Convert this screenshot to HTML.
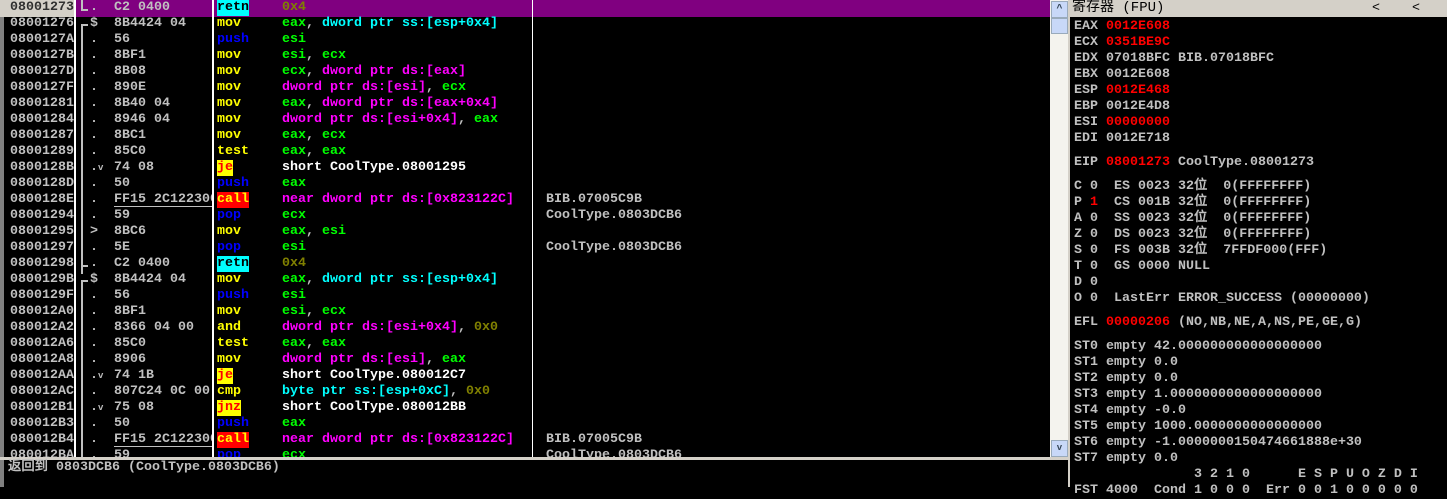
<!DOCTYPE html>
<html><head><meta charset="utf-8"><style>
*{margin:0;padding:0}
body{width:1447px;height:487px;background:#000;position:relative;overflow:hidden;font-family:"Liberation Mono","WenQuanYi Zen Hei",monospace;font-size:13.33px;font-weight:bold;color:#c0c0c0}
.r{position:absolute;left:0;width:1050px;height:16px;line-height:16px;white-space:pre}
.r span{position:absolute}
.a{left:10px}.m{left:90px}.h{left:114px;width:98px;overflow:hidden}.i{left:217px}.o{left:282px}.c{left:546px}
.g{color:#00ff00}.cy{color:#00ffff}.mg{color:#ff00ff}.y{color:#ffff00}.b{color:#0000ff}.ol{color:#808000}.w{color:#fff}.rd{color:#ff0000}
.r span.call{background:#ff0000;color:#ffff00}
.r span.jx{background:#ffff00;color:#ff0000}
.r span.rt{background:#00ffff;color:#000}
.r b{font-weight:bold}
.vl{position:absolute;background:#c0c0c0;width:2px}
.hl{position:absolute;background:#c0c0c0;height:2px}
.rg{position:absolute;left:1074px;white-space:pre;line-height:16px}
.sv{font-size:9px}
</style></head><body>
<div style="position:absolute;left:76px;top:0;width:974px;height:17px;background:#800080"></div>
<div style="position:absolute;left:0;top:0;width:74px;height:17px;background:#d4d0c8"></div>
<div style="position:absolute;left:0;top:17px;width:4px;height:441px;background:#808080"></div>
<div style="position:absolute;left:74px;top:0;width:2px;height:458px;background:#fff"></div>
<div style="position:absolute;left:212px;top:0;width:2px;height:458px;background:#fff"></div>
<div style="position:absolute;left:532px;top:0;width:1px;height:458px;background:#fff"></div>
<div class="vl" style="left:81px;top:0;height:10px"></div><div class="hl" style="left:81px;top:9px;width:7px"></div>
<div class="vl" style="left:81px;top:24px;height:250px"></div><div class="hl" style="left:81px;top:24px;width:7px"></div><div class="hl" style="left:81px;top:265px;width:7px"></div>
<div class="vl" style="left:81px;top:280px;height:178px"></div><div class="hl" style="left:81px;top:280px;width:7px"></div>
<div style="position:absolute;left:114px;top:206px;width:98px;height:1px;background:#c0c0c0"></div>
<div style="position:absolute;left:114px;top:446px;width:98px;height:1px;background:#c0c0c0"></div>

<div class="r" style="top:0"><span class="a" style="color:#303030">08001273</span><span class="m">.</span><span class="h">C2 0400</span><span class="i rt">retn</span><span class="o ol">0x4</span></div>
<div class="r" style="top:16px"><span class="a">08001276</span><span class="m">$</span><span class="h">8B4424 04</span><span class="i y">mov</span><span class="o"><b class="g">eax</b>, <b class="cy">dword ptr ss:[esp+0x4]</b></span></div>
<div class="r" style="top:32px"><span class="a">0800127A</span><span class="m">.</span><span class="h">56</span><span class="i b">push</span><span class="o g">esi</span></div>
<div class="r" style="top:48px"><span class="a">0800127B</span><span class="m">.</span><span class="h">8BF1</span><span class="i y">mov</span><span class="o"><b class="g">esi</b>, <b class="g">ecx</b></span></div>
<div class="r" style="top:64px"><span class="a">0800127D</span><span class="m">.</span><span class="h">8B08</span><span class="i y">mov</span><span class="o"><b class="g">ecx</b>, <b class="mg">dword ptr ds:[eax]</b></span></div>
<div class="r" style="top:80px"><span class="a">0800127F</span><span class="m">.</span><span class="h">890E</span><span class="i y">mov</span><span class="o"><b class="mg">dword ptr ds:[esi]</b>, <b class="g">ecx</b></span></div>
<div class="r" style="top:96px"><span class="a">08001281</span><span class="m">.</span><span class="h">8B40 04</span><span class="i y">mov</span><span class="o"><b class="g">eax</b>, <b class="mg">dword ptr ds:[eax+0x4]</b></span></div>
<div class="r" style="top:112px"><span class="a">08001284</span><span class="m">.</span><span class="h">8946 04</span><span class="i y">mov</span><span class="o"><b class="mg">dword ptr ds:[esi+0x4]</b>, <b class="g">eax</b></span></div>
<div class="r" style="top:128px"><span class="a">08001287</span><span class="m">.</span><span class="h">8BC1</span><span class="i y">mov</span><span class="o"><b class="g">eax</b>, <b class="g">ecx</b></span></div>
<div class="r" style="top:144px"><span class="a">08001289</span><span class="m">.</span><span class="h">85C0</span><span class="i y">test</span><span class="o"><b class="g">eax</b>, <b class="g">eax</b></span></div>
<div class="r" style="top:160px"><span class="a">0800128B</span><span class="m">.<b class="sv">v</b></span><span class="h">74 08</span><span class="i jx">je</span><span class="o w">short CoolType.08001295</span></div>
<div class="r" style="top:176px"><span class="a">0800128D</span><span class="m">.</span><span class="h">50</span><span class="i b">push</span><span class="o g">eax</span></div>
<div class="r" style="top:192px"><span class="a">0800128E</span><span class="m">.</span><span class="h">FF15 2C122300</span><span class="i call">call</span><span class="o mg">near dword ptr ds:[0x823122C]</span><span class="c">BIB.07005C9B</span></div>
<div class="r" style="top:208px"><span class="a">08001294</span><span class="m">.</span><span class="h">59</span><span class="i b">pop</span><span class="o g">ecx</span><span class="c">CoolType.0803DCB6</span></div>
<div class="r" style="top:224px"><span class="a">08001295</span><span class="m">&gt;</span><span class="h">8BC6</span><span class="i y">mov</span><span class="o"><b class="g">eax</b>, <b class="g">esi</b></span></div>
<div class="r" style="top:240px"><span class="a">08001297</span><span class="m">.</span><span class="h">5E</span><span class="i b">pop</span><span class="o g">esi</span><span class="c">CoolType.0803DCB6</span></div>
<div class="r" style="top:256px"><span class="a">08001298</span><span class="m">.</span><span class="h">C2 0400</span><span class="i rt">retn</span><span class="o ol">0x4</span></div>
<div class="r" style="top:272px"><span class="a">0800129B</span><span class="m">$</span><span class="h">8B4424 04</span><span class="i y">mov</span><span class="o"><b class="g">eax</b>, <b class="cy">dword ptr ss:[esp+0x4]</b></span></div>
<div class="r" style="top:288px"><span class="a">0800129F</span><span class="m">.</span><span class="h">56</span><span class="i b">push</span><span class="o g">esi</span></div>
<div class="r" style="top:304px"><span class="a">080012A0</span><span class="m">.</span><span class="h">8BF1</span><span class="i y">mov</span><span class="o"><b class="g">esi</b>, <b class="g">ecx</b></span></div>
<div class="r" style="top:320px"><span class="a">080012A2</span><span class="m">.</span><span class="h">8366 04 00</span><span class="i y">and</span><span class="o"><b class="mg">dword ptr ds:[esi+0x4]</b>, <b class="ol">0x0</b></span></div>
<div class="r" style="top:336px"><span class="a">080012A6</span><span class="m">.</span><span class="h">85C0</span><span class="i y">test</span><span class="o"><b class="g">eax</b>, <b class="g">eax</b></span></div>
<div class="r" style="top:352px"><span class="a">080012A8</span><span class="m">.</span><span class="h">8906</span><span class="i y">mov</span><span class="o"><b class="mg">dword ptr ds:[esi]</b>, <b class="g">eax</b></span></div>
<div class="r" style="top:368px"><span class="a">080012AA</span><span class="m">.<b class="sv">v</b></span><span class="h">74 1B</span><span class="i jx">je</span><span class="o w">short CoolType.080012C7</span></div>
<div class="r" style="top:384px"><span class="a">080012AC</span><span class="m">.</span><span class="h">807C24 0C 00</span><span class="i y">cmp</span><span class="o"><b class="cy">byte ptr ss:[esp+0xC]</b>, <b class="ol">0x0</b></span></div>
<div class="r" style="top:400px"><span class="a">080012B1</span><span class="m">.<b class="sv">v</b></span><span class="h">75 08</span><span class="i jx">jnz</span><span class="o w">short CoolType.080012BB</span></div>
<div class="r" style="top:416px"><span class="a">080012B3</span><span class="m">.</span><span class="h">50</span><span class="i b">push</span><span class="o g">eax</span></div>
<div class="r" style="top:432px"><span class="a">080012B4</span><span class="m">.</span><span class="h">FF15 2C122300</span><span class="i call">call</span><span class="o mg">near dword ptr ds:[0x823122C]</span><span class="c">BIB.07005C9B</span></div>
<div class="r" style="top:448px;height:10px;overflow:hidden"><span class="a">080012BA</span><span class="m">.</span><span class="h">59</span><span class="i b">pop</span><span class="o g">ecx</span><span class="c">CoolType.0803DCB6</span></div>

<div style="position:absolute;left:1050px;top:0;width:18px;height:458px;background:#f4f3ee"></div>
<div style="position:absolute;left:1051px;top:1px;width:15px;height:15px;background:#c8d8f8;border:1px solid #9ab;color:#345;font-size:10px;line-height:15px;text-align:center">^</div>
<div style="position:absolute;left:1051px;top:18px;width:15px;height:14px;background:#c8d8f8;border:1px solid #9ab"></div>
<div style="position:absolute;left:1051px;top:440px;width:15px;height:15px;background:#c8d8f8;border:1px solid #9ab;color:#345;font-size:9px;line-height:15px;text-align:center">v</div>
<div style="position:absolute;left:0;top:457px;width:1068px;height:3px;background:#d4d0c8"></div>
<div style="position:absolute;left:0;top:460px;width:4px;height:27px;background:#808080"></div>
<div style="position:absolute;left:8px;top:460px;line-height:16px;white-space:pre">返回到 0803DCB6 (CoolType.0803DCB6)</div>

<div style="position:absolute;left:1068px;top:0;width:2px;height:487px;background:#d4d0c8"></div>
<div style="position:absolute;left:1070px;top:0;width:377px;height:17px;background:#d4d0c8;color:#000;font-weight:normal;line-height:17px;white-space:pre"><span style="position:absolute;left:2px;font-family:'WenQuanYi Zen Hei','Liberation Mono',monospace;font-size:14px">寄存器 (FPU)</span><span style="position:absolute;left:302px">&lt;</span><span style="position:absolute;left:342px">&lt;</span></div>
<div class="rg" style="top:19px">EAX <span class="rd">0012E608</span>
ECX <span class="rd">0351BE9C</span>
EDX 07018BFC BIB.07018BFC
EBX 0012E608
ESP <span class="rd">0012E468</span>
EBP 0012E4D8
ESI <span class="rd">00000000</span>
EDI 0012E718</div>
<div class="rg" style="top:155px">EIP <span class="rd">08001273</span> CoolType.08001273</div>
<div class="rg" style="top:179px">C 0  ES 0023 32位  0(FFFFFFFF)
P <span class="rd">1</span>  CS 001B 32位  0(FFFFFFFF)
A 0  SS 0023 32位  0(FFFFFFFF)
Z 0  DS 0023 32位  0(FFFFFFFF)
S 0  FS 003B 32位  7FFDF000(FFF)
T 0  GS 0000 NULL
D 0
O 0  LastErr ERROR_SUCCESS (00000000)</div>
<div class="rg" style="top:315px">EFL <span class="rd">00000206</span> (NO,NB,NE,A,NS,PE,GE,G)</div>
<div class="rg" style="top:339px">ST0 empty 42.000000000000000000
ST1 empty 0.0
ST2 empty 0.0
ST3 empty 1.0000000000000000000
ST4 empty -0.0
ST5 empty 1000.0000000000000000
ST6 empty -1.0000000150474661888e+30
ST7 empty 0.0
               3 2 1 0      E S P U O Z D I
FST 4000  Cond 1 0 0 0  Err 0 0 1 0 0 0 0 0</div>
</body></html>
